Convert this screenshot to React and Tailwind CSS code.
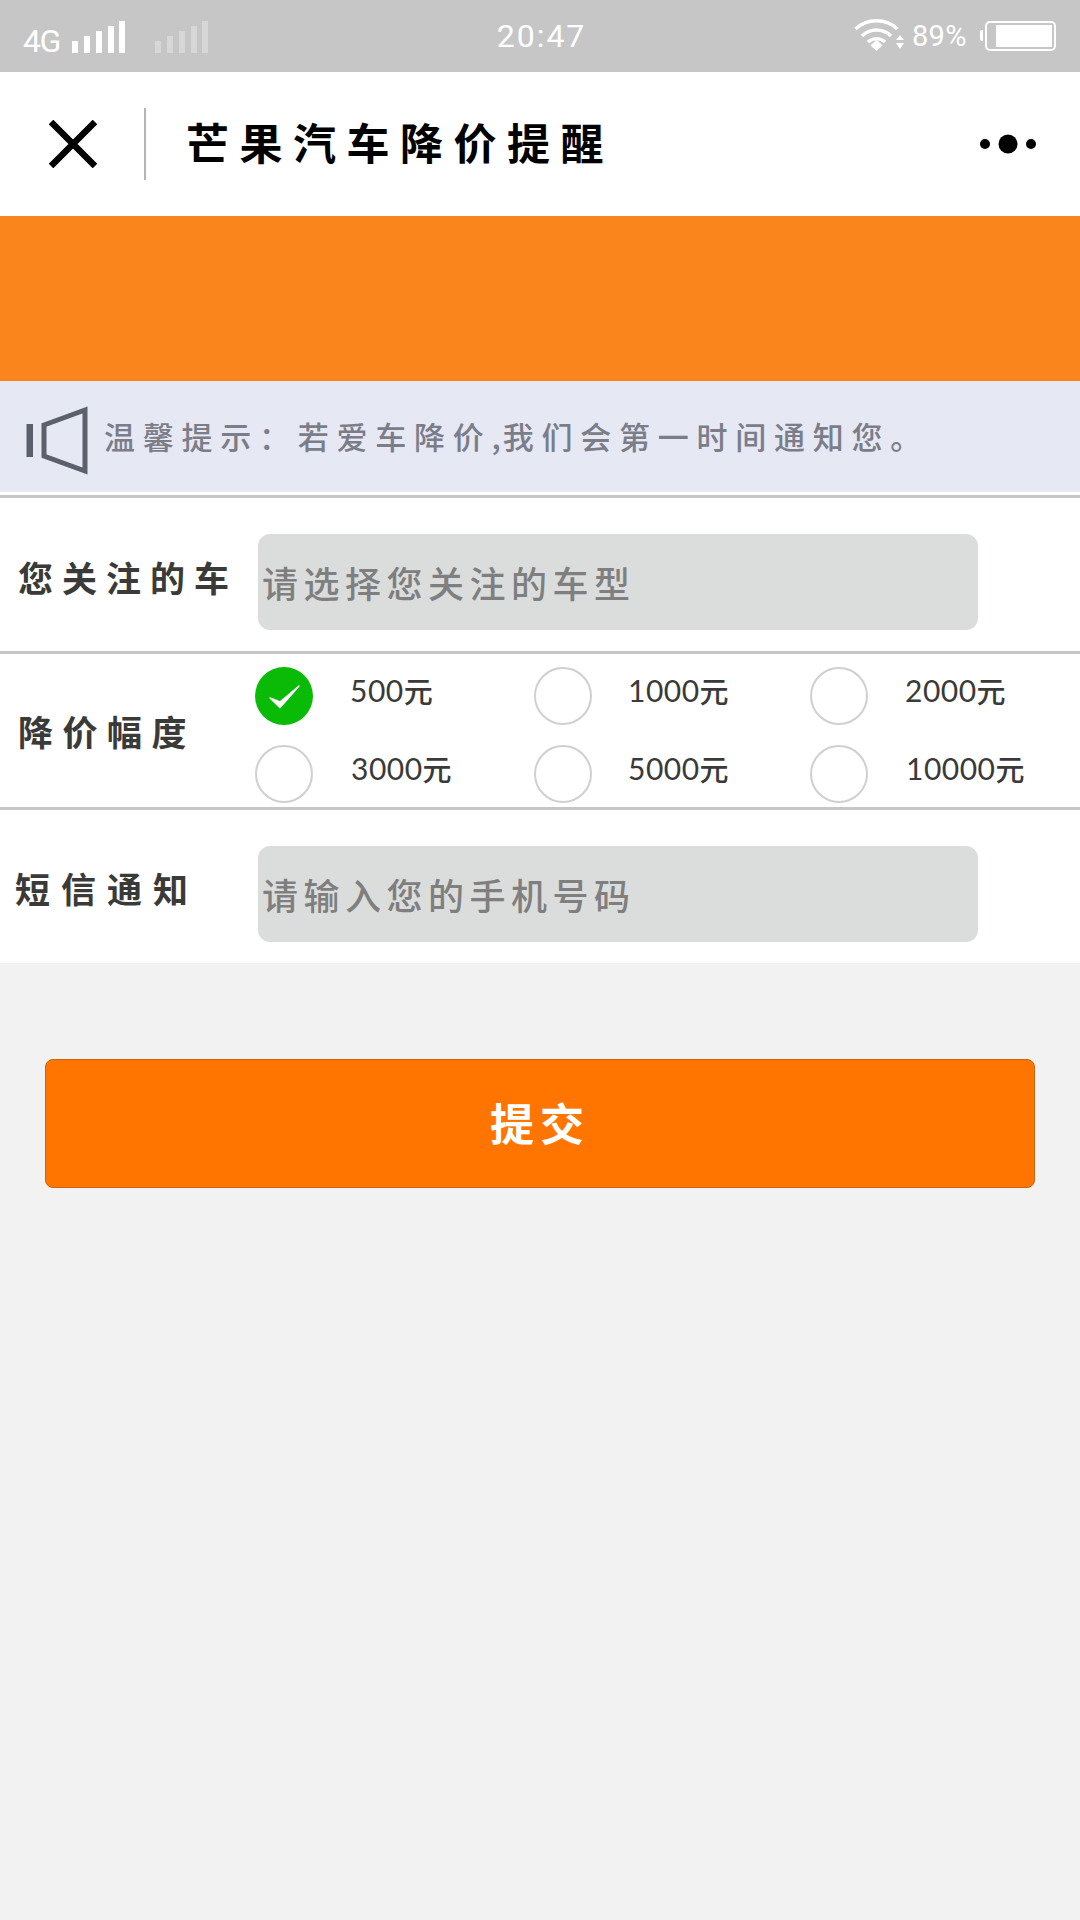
const cjk = "font-['Noto_Sans_CJK_SC','Noto_Sans',sans-serif]";

function Bars({ className }) {
  return (
    <svg width="54" height="34" viewBox="0 0 54 34" className={className} fill="currentColor">
      <rect x="0" y="21" width="6" height="12" />
      <rect x="12" y="16" width="6" height="17" />
      <rect x="24" y="11" width="6" height="22" />
      <rect x="36" y="6" width="6" height="27" />
      <rect x="47" y="1" width="6" height="32" />
    </svg>
  );
}

function StatusBar() {
  return (
    <div className="h-[72px] bg-[#c6c6c6] text-white flex items-center font-['Roboto',sans-serif]">
      <span className="ml-[23px] text-[32px] leading-none tracking-[-1.5px] mt-[10px] w-[49px]">4G</span>
      <Bars className="text-white mt-[2px]" />
      <Bars className="text-white/30 ml-[29px] mt-[2px]" />
      <div className="flex-1 text-center ml-[20px] text-[32px] leading-none tracking-[2px] mb-[1px]">20:47</div>
      <svg width="50" height="34" viewBox="0 0 50 34" className="mb-[2px]" fill="none" stroke="white" strokeWidth="3.4">
        <path d="M1.5 11 C13 0 32 0 43.5 11" />
        <path d="M8 18 C16 10 29 10 37 18" />
        <path d="M14 24 C19 19.5 26 19.5 31 24" />
        <path d="M16.5 27.5 L22.5 21.8 L28.5 27.5 L22.5 33 Z" fill="white" stroke="none" />
        <path d="M42 22 L46 17 L50 22 Z M42 25 L50 25 L46 31 Z" fill="white" stroke="none" />
      </svg>
      <span className="ml-[8px] text-[29px] leading-none mt-[1px] w-[60px] tracking-[0.3px]">89%</span>
      <span className="ml-[8px] w-[3px] h-[11px] bg-white rounded-l-[2px] mb-[1px]" />
      <div className="ml-[2px] mr-[24px] w-[71px] h-[30px] border-2 border-white rounded-[5px] flex justify-end items-stretch p-[2px] mb-[1px]">
        <div className="w-[56px] bg-white" />
      </div>
    </div>
  );
}

function NavBar() {
  return (
    <div className="h-[144px] bg-white flex items-center">
      <svg width="48" height="48" viewBox="0 0 48 48" className="ml-[49px]" stroke="black" strokeWidth="6.5" fill="none">
        <path d="M2 2 L46 46 M46 2 L2 46" />
      </svg>
      <div className="ml-[47px] w-[2px] h-[72px] bg-[#b5b5b5]" />
      <div className={`${cjk} ml-[40px] mb-[6px] text-[43px] leading-none font-bold tracking-[10.5px] text-black whitespace-nowrap`}>芒果汽车降价提醒</div>
      <svg width="66" height="20" viewBox="0 0 66 20" className="ml-auto mr-[34px]" fill="black">
        <circle cx="5" cy="10" r="5" />
        <circle cx="28" cy="10" r="9.5" />
        <circle cx="51" cy="10" r="5" />
      </svg>
    </div>
  );
}

function Notice() {
  return (
    <div className="h-[111px] bg-[#e6e8f4] flex items-center">
      <svg width="62" height="70" viewBox="0 0 62 70" className="ml-[26px] mt-[8px] shrink-0" fill="none" stroke="#5c5f6c">
        <rect x="0.5" y="18" width="6.5" height="33" fill="#5c5f6c" stroke="none" />
        <path d="M18 19 L59 4 L59 65 L18 50 Z" strokeWidth="5" />
      </svg>
      <div className={`${cjk} ml-[16px] mb-[2px] text-[31px] leading-none font-medium text-[#7b7d88] tracking-[7.75px] whitespace-nowrap`}>
        温馨提示：若爱车降价<span className="tracking-[2px]">,</span>我们会第一时间通知您。
      </div>
    </div>
  );
}

function Divider() {
  return <div className="h-[3px] bg-[#c6c6c6]" />;
}

function Field({ label, placeholder, labelClass }) {
  return (
    <div className="h-[153px] bg-white flex items-center">
      <div className={`${cjk} w-[258px] shrink-0 text-[#3a3a38] font-bold text-[35px] leading-none whitespace-nowrap ${labelClass}`}>{label}</div>
      <div className={`${cjk} w-[720px] h-[96px] mt-[15px] bg-[#dbdddc] rounded-[12px] flex items-center pl-[4px] text-[#7f7f7f] font-medium text-[36px] leading-none tracking-[5.5px] whitespace-nowrap`}>
        {placeholder}
      </div>
    </div>
  );
}

function Radio({ amount, checked, gap }) {
  return (
    <div className="flex items-center">
      {checked ? (
        <svg width="58" height="58" viewBox="0 0 58 58" className="shrink-0">
          <circle cx="29" cy="29" r="29" fill="#09bb07" />
          <path d="M15 31 L25 40.5 L44 19 L25 35 Z" fill="white" stroke="white" strokeWidth="1.5" strokeLinejoin="round" />
        </svg>
      ) : (
        <div className="w-[58px] h-[58px] rounded-full border-[2px] border-[#d0d0d0] shrink-0" />
      )}
      <span className={`${gap} mb-[11px] flex items-center text-[#3a3a38] text-[30px] leading-none whitespace-nowrap`}>
        <span className="font-['Lato',sans-serif] tracking-[0.5px]">{amount}</span>
        <span className={`${cjk} font-medium text-[29px]`}>元</span>
      </span>
    </div>
  );
}

function Amounts() {
  return (
    <div className="h-[153px] bg-white flex items-center">
      <div className={`${cjk} w-[255px] shrink-0 text-[#3a3a38] font-bold text-[35px] leading-none tracking-[9.5px] pl-[18px] whitespace-nowrap`}>降价幅度</div>
      <div className="grid grid-cols-[279px_276px_1fr] gap-y-[20px] mt-[8px]">
        <Radio amount="500" checked gap="ml-[37px]" />
        <Radio amount="1000" gap="ml-[36px]" />
        <Radio amount="2000" gap="ml-[37px]" />
        <Radio amount="3000" gap="ml-[38px]" />
        <Radio amount="5000" gap="ml-[36px]" />
        <Radio amount="10000" gap="ml-[38px]" />
      </div>
    </div>
  );
}

export default function App() {
  return (
    <div className="w-[1080px] min-h-[1920px] bg-[#f2f2f2] flex flex-col">
      <StatusBar />
      <NavBar />
      <div className="h-[165px] bg-[#fb851d]" />
      <Notice />
      <div className="h-[3px] bg-white" />
      <Divider />
      <Field label="您关注的车" placeholder="请选择您关注的车型" labelClass="pl-[18px] tracking-[9px] pt-[4px]" />
      <Divider />
      <Amounts />
      <Divider />
      <Field label="短信通知" placeholder="请输入您的手机号码" labelClass="pl-[15px] tracking-[11px] pt-[2px]" />
      <div className="mx-[45px] mt-[96px] h-[129px] bg-[#ff7500] border border-[#c9650d] rounded-[8px] flex items-center justify-center pb-[4px]">
        <span className={`${cjk} text-white font-bold text-[44px] leading-none tracking-[6px]`}>提交</span>
      </div>
    </div>
  );
}
